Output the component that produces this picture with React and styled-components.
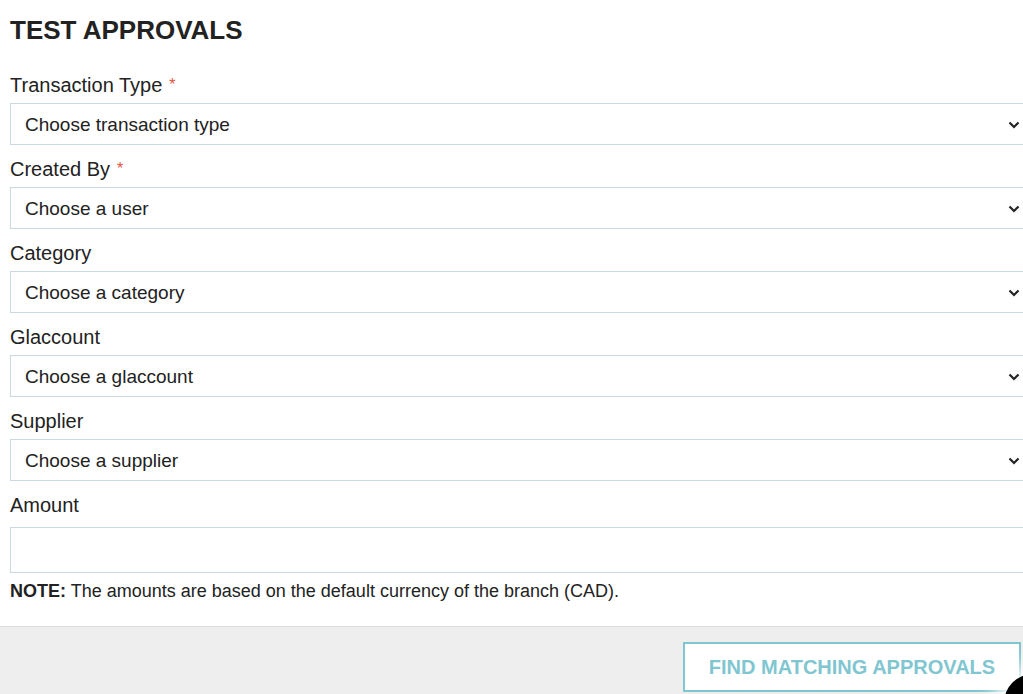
import React from 'react'
import styled, { createGlobalStyle } from 'styled-components'

const GlobalStyle = createGlobalStyle`
  html, body {
    margin: 0;
    padding: 0;
    overflow: hidden;
    background: #fff;
  }
  body {
    font-family: "Liberation Sans", Arial, sans-serif;
    color: #222;
  }
`

const Page = styled.div`
  width: 1031px;
`

const Form = styled.div`
  padding: 16px 0 25px 10px;
`

const Title = styled.h1`
  margin: 0 0 30px;
  font-size: 26px;
  line-height: 28px;
  font-weight: 700;
  color: #222;
`

const Field = styled.div`
  display: flex;
  flex-direction: column;
  margin-bottom: 13px;
`

const Label = styled.label`
  font-size: 20px;
  line-height: 22px;
  color: #222;
  margin-bottom: ${props => (props.tall ? '11px' : '7px')};
`

const Required = styled.span`
  color: #e2523f;
  font-size: 16px;
  margin-left: 7px;
  vertical-align: top;
`

const SelectBox = styled.div`
  display: flex;
  align-items: center;
  justify-content: space-between;
  height: 42px;
  box-sizing: border-box;
  border: 1px solid #c9dbe0;
  padding: 1px 10px 0 14px;
  font-size: 19px;
  color: #222;
  background: #fff;
`

const Chevron = styled.svg`
  width: 12px;
  height: 12px;
`

const AmountInput = styled.div`
  height: 46px;
  box-sizing: border-box;
  border: 1px solid #c9dbe0;
  background: #fff;
`

const Note = styled.p`
  margin: -5px 0 0;
  font-size: 18px;
  line-height: 20px;
  color: #222;
  b {
    font-weight: 700;
  }
`

const Footer = styled.div`
  border-top: 1px solid #dcdcdc;
  background: #eeeeee;
  display: flex;
  justify-content: flex-end;
  padding: 15px 10px 20px;
`

const Button = styled.button`
  width: 338px;
  height: 50px;
  border: 2px solid #80c6d1;
  background: #fff;
  color: #80c6d1;
  font-family: "Liberation Sans", Arial, sans-serif;
  font-size: 20px;
  font-weight: 700;
  padding: 0;
`

const ChatBubble = styled.div`
  position: fixed;
  right: -39px;
  bottom: -38px;
  width: 58px;
  height: 58px;
  border-radius: 50%;
  background: #000;
  box-shadow: 0 0 18px 10px rgba(255, 255, 255, 0.9);
`

const selects = [
  { label: 'Transaction Type', placeholder: 'Choose transaction type', required: true },
  { label: 'Created By', placeholder: 'Choose a user', required: true },
  { label: 'Category', placeholder: 'Choose a category' },
  { label: 'Glaccount', placeholder: 'Choose a glaccount' },
  { label: 'Supplier', placeholder: 'Choose a supplier' },
]

const App = () => {
  return (
    <Page>
      <GlobalStyle />
      <Form>
        <Title>TEST APPROVALS</Title>
        {selects.map(s => (
          <Field key={s.label}>
            <Label>
              {s.label}
              {s.required && <Required>*</Required>}
            </Label>
            <SelectBox>
              <span>{s.placeholder}</span>
              <Chevron viewBox="0 0 12 12">
                <path d="M1.5 3.5 L6 8 L10.5 3.5" fill="none" stroke="#222" strokeWidth="2.2" />
              </Chevron>
            </SelectBox>
          </Field>
        ))}
        <Field>
          <Label tall>Amount</Label>
          <AmountInput />
        </Field>
        <Note>
          <b>NOTE:</b> The amounts are based on the default currency of the branch (CAD).
        </Note>
      </Form>
      <Footer>
        <Button>FIND MATCHING APPROVALS</Button>
      </Footer>
      <ChatBubble />
    </Page>
  )
}

export default App
